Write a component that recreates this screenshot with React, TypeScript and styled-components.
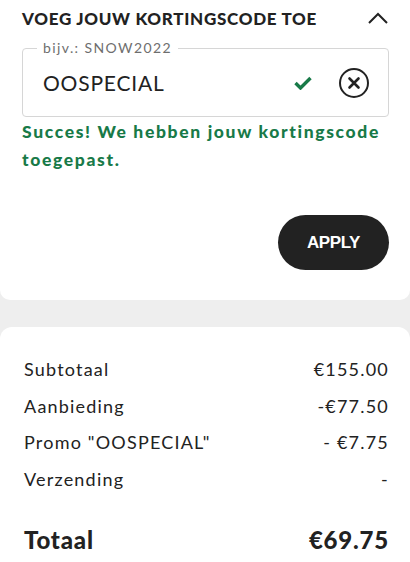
import React from 'react'
import styled, { createGlobalStyle } from 'styled-components'

const GlobalStyle = createGlobalStyle`
  html, body {
    margin: 0;
    padding: 0;
    background: #eeeeee;
  }
  body {
    font-family: Lato, 'Noto Sans', sans-serif;
    color: #222;
  }
`

const Page = styled.div`
  width: 410px;
  height: 562px;
  overflow: hidden;
  display: flex;
  flex-direction: column;
  gap: 27px;
  background: #eeeeee;
`

const PromoPanel = styled.section`
  background: #fff;
  border-radius: 0 0 10px 10px;
  padding: 6px 21px 30px 22px;
  display: flex;
  flex-direction: column;
`

const PanelHeader = styled.div`
  display: flex;
  align-items: center;
  justify-content: space-between;
  height: 24px;
`

const Title = styled.h2`
  margin: 0;
  font-size: 17px;
  font-weight: 900;
  color: #222;
  letter-spacing: 0.7px;
`

const Field = styled.div`
  position: relative;
  margin-top: 18px;
  padding: 0 18px 0 20px;
  border: 1px solid #d6d6d6;
  border-radius: 4px;
  height: 67px;
  display: flex;
  align-items: center;
`

const FloatLabel = styled.span`
  position: absolute;
  top: -9px;
  left: 14px;
  padding: 0 6px;
  background: #fff;
  font-size: 14px;
  line-height: 16px;
  color: #6e6e6e;
  letter-spacing: 1.4px;
`

const CodeText = styled.span`
  flex: 1;
  font-size: 21px;
  letter-spacing: 0.8px;
  color: #222;
`

const IconSlot = styled.span<{ $gap?: number }>`
  display: flex;
  align-items: center;
  margin-left: ${p => p.$gap ?? 0}px;
`

const Success = styled.p`
  margin: 1px 0 0;
  font-size: 17.5px;
  font-weight: 900;
  line-height: 28px;
  letter-spacing: 1.65px;
  color: #187a48;
`

const ApplyRow = styled.div`
  display: flex;
  justify-content: flex-end;
  margin-top: 41px;
`

const ApplyButton = styled.button`
  width: 111px;
  height: 55px;
  border: none;
  border-radius: 28px;
  background: #222;
  color: #fff;
  font-family: 'Liberation Sans', Arial, sans-serif;
  font-weight: 700;
  font-size: 17px;
  letter-spacing: -0.4px;
`

const SummaryCard = styled.section`
  flex: 1;
  background: #fff;
  border-radius: 12px 12px 0 0;
  padding: 24px 21px 0 24px;
`

const Row = styled.div<{ $total?: boolean }>`
  display: flex;
  justify-content: space-between;
  align-items: center;
  height: ${p => (p.$total ? '34px' : '36.5px')};
  margin-top: ${p => (p.$total ? '25px' : '0')};
  font-size: ${p => (p.$total ? '24px' : '18px')};
  font-weight: ${p => (p.$total ? 900 : 400)};
  letter-spacing: ${p => (p.$total ? '0.8px' : '1.2px')};
  color: #222;
`

const lines = [
  ['Subtotaal', '€155.00'],
  ['Aanbieding', '-€77.50'],
  ['Promo "OOSPECIAL"', '- €7.75'],
  ['Verzending', '-'],
]

export default function App() {
  return (
    <Page>
      <GlobalStyle />
      <PromoPanel>
        <PanelHeader>
          <Title>VOEG JOUW KORTINGSCODE TOE</Title>
          <svg width="22" height="14" viewBox="0 0 22 14">
            <path d="M2 12 L11 3 L20 12" fill="none" stroke="#222" strokeWidth="2" />
          </svg>
        </PanelHeader>
        <Field>
          <FloatLabel>bijv.: SNOW2022</FloatLabel>
          <CodeText>OOSPECIAL</CodeText>
          <IconSlot>
            <svg width="18" height="14" viewBox="0 0 18 14">
              <path d="M1.5 7 L6.5 12 L16.5 2" fill="none" stroke="#187a48" strokeWidth="3.4" />
            </svg>
          </IconSlot>
          <IconSlot $gap={26}>
            <svg width="32" height="32" viewBox="0 0 32 32">
              <circle cx="16" cy="16" r="14" fill="none" stroke="#222" strokeWidth="2" />
              <path d="M11.5 11.5 L20.5 20.5 M20.5 11.5 L11.5 20.5" stroke="#222" strokeWidth="2.6" strokeLinecap="round" />
            </svg>
          </IconSlot>
        </Field>
        <Success>Succes! We hebben jouw kortingscode toegepast.</Success>
        <ApplyRow>
          <ApplyButton>APPLY</ApplyButton>
        </ApplyRow>
      </PromoPanel>
      <SummaryCard>
        {lines.map(([label, value]) => (
          <Row key={label}>
            <span>{label}</span>
            <span>{value}</span>
          </Row>
        ))}
        <Row $total>
          <span>Totaal</span>
          <span>€69.75</span>
        </Row>
      </SummaryCard>
    </Page>
  )
}
